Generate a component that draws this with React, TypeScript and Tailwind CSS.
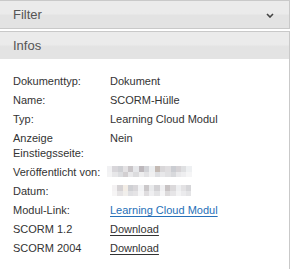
const rows: { label: string; value: React.ReactNode }[] = [];

const mosaicA = [
  'bg-[#f1f1f3]', 'bg-[#d8d6da]', 'bg-[#cfd0d4]', 'bg-[#e4e2e4]', 'bg-[#c9c5c8]', 'bg-[#e6e7ea]', 'bg-[#bdb8bc]', 'bg-[#d2d3d7]',
  'bg-[#eceef0]', 'bg-[#c4bab4]', 'bg-[#d9d7d9]', 'bg-[#e0dee0]', 'bg-[#cbcdd2]', 'bg-[#d6d3d6]', 'bg-[#dfe0e2]', 'bg-[#eef0f2]',
  'bg-[#f3f3f4]', 'bg-[#e7e7e9]', 'bg-[#dcdde0]', 'bg-[#d2cfd1]', 'bg-[#e9e9eb]', 'bg-[#dcdcde]', 'bg-[#eeeeef]', 'bg-[#e3e3e5]',
  'bg-[#f0f0f1]', 'bg-[#dedfe2]', 'bg-[#e8e8ea]', 'bg-[#e1e1e3]', 'bg-[#d8d9dc]', 'bg-[#e9e9eb]', 'bg-[#eeeef0]', 'bg-[#f5f5f6]',
];

const mosaicB = [
  'bg-[#f4f2f3]', 'bg-[#d6d3d5]', 'bg-[#f3ede6]', 'bg-[#cfd0d4]', 'bg-[#d9d7da]', 'bg-[#f2f3f5]', 'bg-[#cbc8ca]', 'bg-[#e9eaec]',
  'bg-[#d3d2d5]', 'bg-[#f0f0f2]', 'bg-[#c8c3c4]', 'bg-[#dbd9db]', 'bg-[#eeeff1]', 'bg-[#e3e2e4]', 'bg-[#d6d6d9]', 'bg-[#f2f2f3]',
  'bg-[#f6f5f5]', 'bg-[#e6e4e5]', 'bg-[#f1efec]', 'bg-[#e0e0e3]', 'bg-[#e5e4e6]', 'bg-[#f6f6f7]', 'bg-[#dfdddf]', 'bg-[#efeff1]',
  'bg-[#e3e3e5]', 'bg-[#f5f5f6]', 'bg-[#dcdadb]', 'bg-[#e6e5e7]', 'bg-[#f3f3f4]', 'bg-[#ebebed]', 'bg-[#e4e4e6]', 'bg-[#f6f6f7]',
];

function Mosaic({ cells, cols }: { cells: string[]; cols: string }) {
  return (
    <div className={`grid ${cols} grid-rows-[6px_5px] mt-[-2px]`}>
      {cells.map((c, i) => (
        <div key={i} className={c} />
      ))}
    </div>
  );
}

rows.push(
  { label: 'Dokumenttyp:', value: 'Dokument' },
  { label: 'Name:', value: 'SCORM-Hülle' },
  { label: 'Typ:', value: 'Learning Cloud Modul' },
  { label: 'Anzeige Einstiegsseite:', value: 'Nein' },
  {
    label: 'Veröffentlicht von:',
    value: (
      <div className="ml-[-3px]">
        <Mosaic cells={mosaicA} cols="grid-cols-[repeat(16,5.3px)]" />
      </div>
    ),
  },
  {
    label: 'Datum:',
    value: (
      <div className="pl-[2px]">
        <Mosaic cells={mosaicB.slice(0, 15).concat(mosaicB.slice(16, 31))} cols="grid-cols-[repeat(15,5.3px)]" />
      </div>
    ),
  },
  {
    label: 'Modul-Link:',
    value: <a className="text-[#2670b8] underline underline-offset-[2px]">Learning Cloud Modul</a>,
  },
  { label: 'SCORM 1.2', value: <a className="underline underline-offset-[2px]">Download</a> },
  { label: 'SCORM 2004', value: <a className="underline underline-offset-[2px]">Download</a> },
);

function PanelHeader({ title, chevron }: { title: string; chevron?: boolean }) {
  return (
    <div className="h-[27px] flex items-center justify-between pl-[13px] pr-[15px] text-[13px] text-[#555] bg-[linear-gradient(to_bottom,#ebebeb_0%,#ebebeb_46%,#e3e3e3_54%,#e3e3e3_100%)]">
      <span>{title}</span>
      {chevron && (
        <svg width="8" height="5" viewBox="0 0 8 5" className="mt-[1px]">
          <polyline points="1,1 4,4 7,1" fill="none" stroke="#444" strokeWidth="1.6" />
        </svg>
      )}
    </div>
  );
}

export default function App() {
  return (
    <div className="w-[290px] h-[269px] bg-white overflow-hidden font-['Liberation_Sans',Arial,sans-serif]">
      <div className="border-t border-b border-r border-[#c9c9c9]">
        <PanelHeader title="Filter" chevron />
      </div>
      <div className="mt-[2px] border-t border-r border-[#c9c9c9] h-[240px]">
        <PanelHeader title="Infos" />
        <div className="pl-[13px] pt-[13px] grid grid-cols-[97px_1fr] text-[11px] leading-[15px] text-[#333]">
          {rows.map((r) => (
            <div key={r.label} className="contents">
              <div className="py-[2px] pr-[8px]">{r.label}</div>
              <div className="py-[2px] flex items-center h-full">
                {typeof r.value === 'string' ? <span className="self-start">{r.value}</span> : r.value}
              </div>
            </div>
          ))}
        </div>
      </div>
    </div>
  );
}
